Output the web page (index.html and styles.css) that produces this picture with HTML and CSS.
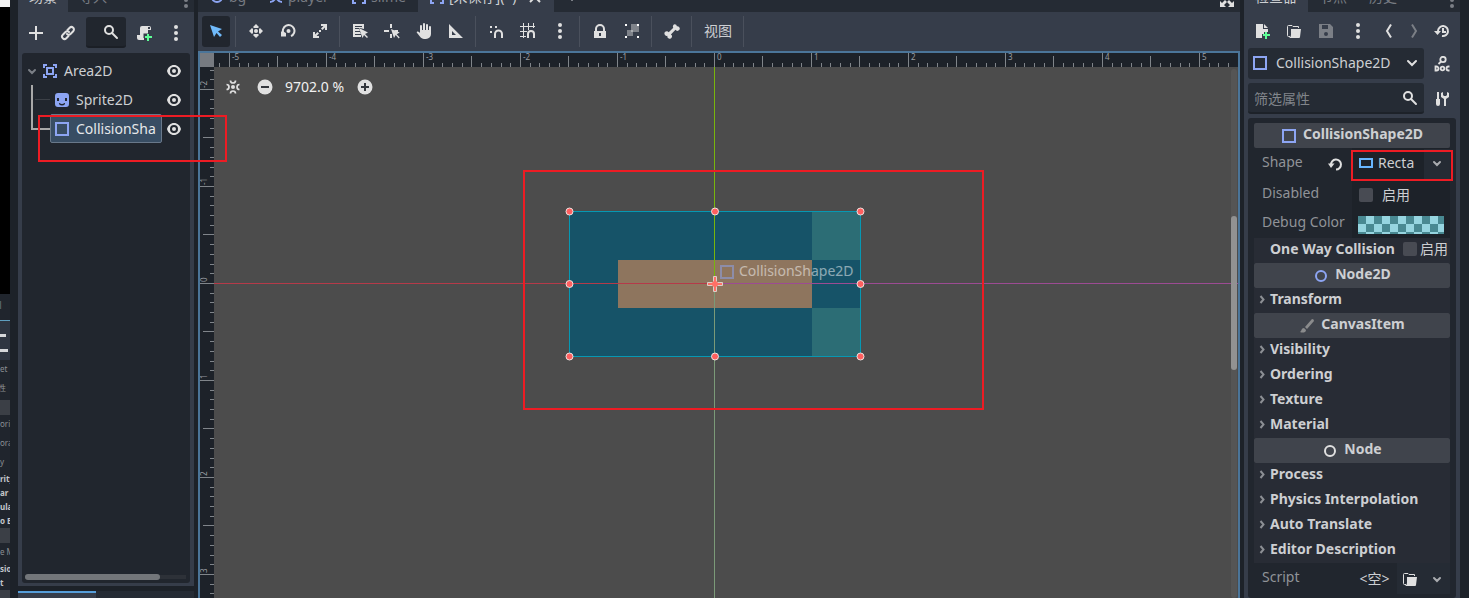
FILE: index.html
```html
<!DOCTYPE html>
<html lang="zh-CN">
<head>
<meta charset="utf-8">
<title>2D Scene Editor</title>
<link rel="stylesheet" href="styles.css">
</head>
<body>
<svg class="defs" aria-hidden="true">
  <symbol id="add" viewBox="0 0 16 16"><path d="M7 1v6H1v2h6v6h2V9h6V7H9V1z"/></symbol>
  <symbol id="link" viewBox="0 0 16 16"><g fill="none" stroke="currentColor" stroke-width="2" stroke-linecap="round"><path d="M7.500 5 9.700 2.800a2.450 2.450 0 0 1 3.500 3.500L10.500 9a2.450 2.450 0 0 1-3.500 0"/><path d="M8.500 11 6.300 13.200a2.450 2.450 0 0 1-3.500-3.500L5.500 7A2.450 2.450 0 0 1 9 7"/></g></symbol>
  <symbol id="search" viewBox="0 0 16 16"><g fill="none" stroke="currentColor" stroke-width="2"><circle cx="6" cy="6" r="4"/><path d="m9 9 5 5" stroke-linecap="round"/></g></symbol>
  <symbol id="script-add" viewBox="0 0 16 16"><path d="M6 1a2 2 0 0 0-2 2v7H1v3a2 2 0 0 0 2 2h5v-2h-.5V8.500H12V5h3V3a2 2 0 0 0-2-2zM12 2h2v2h-2z" fill-rule="evenodd"/><path d="M11 9h2v2h3v2h-3v3h-2v-3H9v-2h2z" fill="#5fff97"/></symbol>
  <symbol id="dots" viewBox="0 0 16 16"><circle cx="8" cy="2" r="2"/><circle cx="8" cy="8" r="2"/><circle cx="8" cy="14" r="2"/></symbol>
  <symbol id="eye" viewBox="0 0 16 16"><path fill-rule="evenodd" d="M8 2C4.500 2 2 4.500 1 8c1 3.500 3.500 6 7 6s6-2.500 7-6c-1-3.500-3.500-6-7-6zm0 2a4 4 0 1 1 0 8 4 4 0 0 1 0-8zm0 2a2 2 0 1 0 0 4 2 2 0 0 0 0-4z"/></symbol>
  <symbol id="down" viewBox="0 0 16 16"><path d="m4 6 4 4 4-4" fill="none" stroke="currentColor" stroke-width="2" stroke-linecap="round"/></symbol>
  <symbol id="down-small" viewBox="0 0 16 16"><path d="m5 7 3 3 3-3" fill="none" stroke="currentColor" stroke-width="2" stroke-linecap="round"/></symbol>
  <symbol id="right" viewBox="0 0 16 16"><path d="m6.500 5 3 3.500-3 3.500" fill="none" stroke="currentColor" stroke-width="2"/></symbol>
  <symbol id="area" viewBox="0 0 16 16"><path fill="#8da5f3" fill-rule="evenodd" d="M1 1h4v2H3v2H1zM11 1h4v4h-2V3h-2zM1 11h2v2h2v2H1zM13 11h2v4h-4v-2h2zM4 4h8v8H4zm2 2v4h4V6z"/></symbol>
  <symbol id="scene" viewBox="0 0 16 16"><path fill="#8da5f3" fill-rule="evenodd" d="M1 1h4v2H3v10h2v2H1zM11 1h4v14h-4v-2h2V3h-2zM5 5h6v6H5zm2 2v2h2V7z"/></symbol>
  <symbol id="sprite" viewBox="0 0 16 16"><path fill="#8da5f3" fill-rule="evenodd" d="M4 1h8a3 3 0 0 1 3 3v8a3 3 0 0 1-3 3H4a3 3 0 0 1-3-3V4a3 3 0 0 1 3-3zM3 6v3h2V6zm8 0v3h2V6zm-6 5a3 2.500 0 0 0 6 0H10a2 1 0 0 1-4 0z"/></symbol>
  <symbol id="shape" viewBox="0 0 16 16"><path d="M2 2h12v12H2z" fill="none" stroke="#8da5f3" stroke-width="2"/></symbol>
  <symbol id="rect" viewBox="0 0 16 16"><path d="M2 4h12v8H2z" fill="none" stroke="#68b6ff" stroke-width="2"/></symbol>
  <symbol id="ring" viewBox="0 0 16 16"><circle cx="8" cy="8" r="5" fill="none" stroke="currentColor" stroke-width="2"/></symbol>
  <symbol id="cursor" viewBox="0 0 16 16"><path d="m2 2 4 12 2.500-4 3.500 4 2-2-4-3.500L14 6z"/></symbol>
  <symbol id="move" viewBox="0 0 16 16"><circle cx="8" cy="8" r="2"/><path d="m8 1 3 3-1 1H6L5 4zM8 15l-3-3 1-1h4l1 1zM1 8l3-3 1 1v4l-1 1zM15 8l-3 3-1-1V6l1-1z"/></symbol>
  <symbol id="rotate" viewBox="0 0 16 16"><path d="M3.500 10.500A5.800 5.800 0 1 1 11 13.200" fill="none" stroke="currentColor" stroke-width="2"/><circle cx="8.500" cy="8" r="2"/><path d="M1 8.500h2l3 1.500v3.500H1z"/></symbol>
  <symbol id="scale" viewBox="0 0 16 16"><path d="M9 1h6v6h-2V4.500L10.500 7 9 5.500 11.500 3H9zM1 9h2v2.500L5.500 9 7 10.500 4.500 13H7v2H1zM7 7h2v2H7z"/></symbol>
  <symbol id="listsel" viewBox="0 0 16 16"><path d="M1 1h11v5L8 5H3v1h4l1 2H3v1h5l1 2H3v1h6v2H1zM3 3v1h7V3z" fill-rule="evenodd"/><path d="m7 5 3.500 10 1.500-3 3 3 1-1-3-3 3-1.500z"/></symbol>
  <symbol id="pivot" viewBox="0 0 16 16"><path d="M6 1h2v4H6zM0 7h5v2H0zM10 7h4v2h-2zM6 11h2v4H6z"/><path d="m7 6 3 9 1.700-3 3 3.500 1-1-3-3.300 3-1.700z"/></symbol>
  <symbol id="hand" viewBox="0 0 16 16"><path d="M7 1a1 1 0 0 1 2 0v6h1V2a1 1 0 0 1 2 0v5h1V4a1 1 0 0 1 2 0v7a5 5 0 0 1-5 5H8C5 16 3 12 1 10c-1-1.500 1-2 2-1l1 1V3a1 1 0 0 1 2 0v4h1z"/></symbol>
  <symbol id="triangle" viewBox="0 0 16 16"><path fill-rule="evenodd" d="M1 1v14h14zm3 7 4 4H4z"/></symbol>
  <symbol id="snap" viewBox="0 0 16 16"><path d="M2 3h2v2H2zM7 3h2v2H7zM2 8h2v2H2z"/><path d="M7 15v-4a3.500 3.500 0 0 1 7 0v4" fill="none" stroke="currentColor" stroke-width="2"/></symbol>
  <symbol id="gridsnap" viewBox="0 0 16 16"><path d="M3.500 0v15M8.500 0v7M13.500 0v5M0 3.500h15M0 8.500h7M0 13.500h6" stroke="currentColor" fill="none"/><path d="M8 15v-4a3 3 0 0 1 6 0v4" fill="none" stroke="currentColor" stroke-width="2"/></symbol>
  <symbol id="lock" viewBox="0 0 16 16"><path fill-rule="evenodd" d="M8 1a5 5 0 0 0-5 5v2H2v7h12V8h-1V6a5 5 0 0 0-5-5zm0 2a3 3 0 0 1 3 3v2H5V6a3 3 0 0 1 3-3zM7 10h2v3H7z"/></symbol>
  <symbol id="group" viewBox="0 0 16 16"><path d="M7 1h6v2h2v6H9v4H3V7h4z" fill="#7f838a"/><path d="M7 7h2v2H7z" fill="#a9acb0"/><path d="M1 1h2v2H1zM13 1h2v2h-2zM1 13h2v2H1zM13 13h2v2h-2z" fill="#fff"/></symbol>
  <symbol id="bone" viewBox="0 0 16 16"><path d="M10.500 1.200a2.300 2.300 0 0 0-1.200 3.500L4.700 9.300a2.300 2.300 0 1 0-1.200 3.400 2.300 2.300 0 1 0 3.400-1.200l4.600-4.700a2.300 2.300 0 1 0 1.400-3.500 2.300 2.300 0 0 0-2.400-2.100z"/></symbol>
  <symbol id="new" viewBox="0 0 16 16"><path d="M2 1h7v5h5v3h-4v2H8v4H2zM10 1l4 4h-4z"/><path d="M11 9h2v2h3v2h-3v3h-2v-3H9v-2h2z" fill="#5fff97"/></symbol>
  <symbol id="folder" viewBox="0 0 16 16"><path d="M4 13.500H2.500a1 1 0 0 1-1-1v-9a1 1 0 0 1 1-1H6l1 1h5.500V5" fill="none" stroke="currentColor"/><path d="M5 6h10l-1 8a1 1 0 0 1-1 1H3q2-1 2-3z"/></symbol>
  <symbol id="save" viewBox="0 0 16 16"><path fill-rule="evenodd" d="M1 1h11l3 3v11H1zm3 1v4h6V2zm4 7a2 2 0 1 0 0 4 2 2 0 0 0 0-4z"/></symbol>
  <symbol id="back" viewBox="0 0 16 16"><path d="m11 1.500-4 6.500 4 6.500" fill="none" stroke="currentColor" stroke-width="2"/></symbol>
  <symbol id="next" viewBox="0 0 16 16"><path d="m8 1.500 4 6.500-4 6.500" fill="none" stroke="currentColor" stroke-width="2"/></symbol>
  <symbol id="history" viewBox="0 0 16 16"><path d="M4 8a5 5 0 1 1 4 5M9 5v4h3" fill="none" stroke="currentColor" stroke-width="2"/><path d="M0 8h7l-3.500 4z"/></symbol>
  <symbol id="doc" viewBox="0 0 16 16"><g fill="none" stroke="currentColor" stroke-width="1.800"><circle cx="9" cy="3.500" r="2.700"/><path d="M7.200 5.300 4.500 8"/><path d="M1.500 10.500h1a2 2 0 0 1 0 4h-1zM15.500 10.500h-1a2 2 0 0 0 0 4h1" /><circle cx="8.500" cy="12.500" r="1.800"/></g></symbol>
  <symbol id="tools" viewBox="0 0 16 16"><path d="M3 1h2v7h1v5a2 2 0 0 1-4 0V8h1zM9 1v3l1 1h2l1-1V1l2 1v4l-3 2v7h-2V8L7 6V2z"/></symbol>
  <symbol id="reload" viewBox="0 0 16 16"><path d="M4 9a5 5 0 1 1 5 4.500" fill="none" stroke="currentColor" stroke-width="2"/><path d="M1 7.500h6.500L4 12z"/></symbol>
  <symbol id="brush" viewBox="0 0 16 16"><path d="m6 9 7-8q2 0 2 2L8 11zM5 10l2 2c0 3-4 3-6 2 2-1 1-4 4-4z" fill="#8b8c8d"/></symbol>
  <symbol id="center" viewBox="0 0 16 16"><circle cx="8" cy="8" r="2"/><path d="M5.500 1.500q0 2.500 2.500 2.500t2.500-2.500M5.500 14.500Q5.500 12 8 12t2.500 2.500M1.500 5.500Q4 5.500 4 8t-2.500 2.500M14.500 5.500Q12 5.500 12 8t2.500 2.500" fill="none" stroke="currentColor" stroke-width="1.700"/></symbol>
  <symbol id="minus" viewBox="0 0 16 16"><circle cx="8" cy="8" r="7.500"/><path d="M4 7h8v2H4z" fill="#33373d"/></symbol>
  <symbol id="plus" viewBox="0 0 16 16"><circle cx="8" cy="8" r="7.500"/><path d="M4 7h3V4h2v3h3v2H9v3H7V9H4z" fill="#33373d"/></symbol>
  <symbol id="expand" viewBox="0 0 16 16"><path d="M9 1h6v6l-2-2-3 3-2-2 3-3zM1 9l2 2 3-3 2 2-3 3 2 2H1zM1 1h6L5 3l3 3-2 2-3-3-2 2zM15 15H9l2-2-3-3 2-2 3 3 2-2z"/></symbol>
  <symbol id="close" viewBox="0 0 16 16"><path d="m3 3 10 10M13 3 3 13" stroke="currentColor" stroke-width="2" fill="none"/></symbol>
  <symbol id="player" viewBox="0 0 16 16"><path d="M2 3q4 0 6 5t6 5M2 13q4 0 6-5t6-5" stroke="#8da5f3" stroke-width="2" fill="none"/></symbol>
</svg>

<div class="app">
  <aside class="sliver" aria-hidden="true">
    <div class="sliver-top"></div>
    <div class="sliver-black"></div>
    <div class="sliver-row tall">引</div>
    <div class="sliver-tools"><i></i><i></i></div>
    <div class="sliver-row">et</div>
    <div class="sliver-row cjk">性</div>
    <div class="sliver-bar"></div>
    <div class="sliver-row">ori</div>
    <div class="sliver-row">ora</div>
    <div class="sliver-row">y</div>
    <div class="sliver-row bold">rity</div>
    <div class="sliver-row bold">ar</div>
    <div class="sliver-row bold">ula</div>
    <div class="sliver-row bold">o B</div>
    <div class="sliver-bar"></div>
    <div class="sliver-row">e M</div>
    <div class="sliver-row bold">sio</div>
    <div class="sliver-row bold">t</div>
    <div class="sliver-bar"></div>
  </aside>

  <div class="left">
    <section class="dock scene">
      <div class="tabs">
        <button class="tab active">场景</button><button class="tab">导入</button>
        <button class="tab-menu" aria-label="更多"><svg class="ico dim"><use href="#dots"/></svg></button>
      </div>
      <div class="scene-tools">
        <button class="btn" aria-label="添加"><svg class="ico"><use href="#add"/></svg></button>
        <button class="btn" aria-label="实例化"><svg class="ico"><use href="#link"/></svg></button>
        <label class="search"><input type="text" aria-label="筛选节点"><svg class="ico"><use href="#search"/></svg></label>
        <button class="btn" aria-label="附加脚本"><svg class="ico"><use href="#script-add"/></svg></button>
        <button class="btn" aria-label="选项"><svg class="ico"><use href="#dots"/></svg></button>
      </div>
      <div class="tree">
        <ul class="nodes">
          <li class="node root"><svg class="ico dim"><use href="#down-small"/></svg><svg class="ico"><use href="#area"/></svg><span class="name">Area2D</span><button class="eye" aria-label="可见"><svg class="ico"><use href="#eye"/></svg></button></li>
          <li class="node"><span class="branch"></span><span class="item"><svg class="ico"><use href="#sprite"/></svg><span class="name">Sprite2D</span></span><button class="eye" aria-label="可见"><svg class="ico"><use href="#eye"/></svg></button></li>
          <li class="node"><span class="branch last"></span><span class="item selected"><svg class="ico"><use href="#shape"/></svg><span class="name">CollisionSha</span></span><button class="eye" aria-label="可见"><svg class="ico"><use href="#eye"/></svg></button></li>
        </ul>
        <div class="hscroll"><span></span></div>
      </div>
    </section>
    <section class="dock lower"><div class="lower-tab"></div></section>
  </div>

  <main class="center">
    <div class="tabs">
      <button class="tab scene-tab w-bg"><svg class="ico blue"><use href="#ring"/></svg>bg</button>
      <button class="tab scene-tab w-player"><svg class="ico"><use href="#player"/></svg>player</button>
      <button class="tab scene-tab w-slime"><svg class="ico"><use href="#scene"/></svg>slime</button>
      <button class="tab scene-tab active w-open"><svg class="ico"><use href="#scene"/></svg>[未保存](*)<svg class="ico close"><use href="#close"/></svg></button>
      <button class="tab new-tab" aria-label="新建场景"><svg class="ico dim"><use href="#add"/></svg></button>
      <button class="tab-menu" aria-label="专注模式"><svg class="ico"><use href="#expand"/></svg></button>
    </div>
    <div class="toolbar">
      <button class="btn on" aria-label="选择"><svg class="ico"><use href="#cursor"/></svg></button><i class="sep"></i>
      <button class="btn" aria-label="移动"><svg class="ico"><use href="#move"/></svg></button>
      <button class="btn" aria-label="旋转"><svg class="ico"><use href="#rotate"/></svg></button>
      <button class="btn" aria-label="缩放"><svg class="ico"><use href="#scale"/></svg></button><i class="sep"></i>
      <button class="btn" aria-label="列表选择"><svg class="ico"><use href="#listsel"/></svg></button>
      <button class="btn" aria-label="轴心"><svg class="ico"><use href="#pivot"/></svg></button>
      <button class="btn" aria-label="平移"><svg class="ico"><use href="#hand"/></svg></button>
      <button class="btn" aria-label="标尺"><svg class="ico"><use href="#triangle"/></svg></button><i class="sep"></i>
      <button class="btn" aria-label="智能吸附"><svg class="ico"><use href="#snap"/></svg></button>
      <button class="btn" aria-label="栅格吸附"><svg class="ico"><use href="#gridsnap"/></svg></button>
      <button class="btn" aria-label="吸附选项"><svg class="ico"><use href="#dots"/></svg></button><i class="sep"></i>
      <button class="btn" aria-label="锁定"><svg class="ico"><use href="#lock"/></svg></button>
      <button class="btn" aria-label="编组"><svg class="ico"><use href="#group"/></svg></button><i class="sep"></i>
      <button class="btn" aria-label="骨骼"><svg class="ico"><use href="#bone"/></svg></button><i class="sep"></i>
      <button class="btn text">视图</button><i class="sep"></i>
    </div>
    <div class="viewport">
      <div class="corner"></div>
      <svg class="ruler">
        <defs><pattern id="ticks-x" patternUnits="userSpaceOnUse" x="500" y="0" width="97" height="14"><path class="tick" d="M0 0h1v14H0zM10 10h1v4h-1zM19 10h1v4h-1zM29 10h1v4h-1zM39 10h1v4h-1zM48 3h1v11h-1zM58 10h1v4h-1zM68 10h1v4h-1zM78 10h1v4h-1zM87 10h1v4h-1z"/></pattern></defs>
        <rect width="100%" height="14" fill="url(#ticks-x)"/>
        <g class="num"><text x="18" y="7">-5</text><text x="115" y="7">-4</text><text x="212" y="7">-3</text><text x="309" y="7">-2</text><text x="406" y="7">-1</text><text x="503" y="7">0</text><text x="600" y="7">1</text><text x="697" y="7">2</text><text x="794" y="7">3</text><text x="891" y="7">4</text><text x="988" y="7">5</text></g>
      </svg>
      <svg class="ruler">
        <defs><pattern id="ticks-y" patternUnits="userSpaceOnUse" x="0" y="216" width="14" height="97"><path class="tick" d="M0 0h14v1H0zM10 10h4v1h-4zM10 19h4v1h-4zM10 29h4v1h-4zM10 39h4v1h-4zM3 48h11v1H3zM10 58h4v1h-4zM10 68h4v1h-4zM10 78h4v1h-4zM10 87h4v1h-4z"/></pattern></defs>
        <rect width="14" height="100%" fill="url(#ticks-y)"/>
        <g class="num"><text transform="translate(7 21) rotate(-90)">-2</text><text transform="translate(7 118) rotate(-90)">-1</text><text transform="translate(7 215) rotate(-90)">0</text><text transform="translate(7 312) rotate(-90)">1</text><text transform="translate(7 409) rotate(-90)">2</text><text transform="translate(7 506) rotate(-90)">3</text></g>
      </svg>
      <div class="stage">
        <svg class="world">
          <path d="M355 144h243v145H355z" fill="#165368"/>
          <path d="M598 193h49v48h-49z" fill="#165368"/>
          <path d="M598 144h49v49h-49zM598 241h49v48h-49z" fill="#2c6d75"/>
          <path d="M404 193h194v48H404z" fill="#8e755e"/>
          <path d="M500 0h1v216h-1z" fill="#78b50c"/>
          <path d="M500 217h1v400h-1z" fill="#7b9a78"/>
          <path d="M0 216h500v1H0z" fill="#b53a49"/>
          <rect x="501" y="216" width="100%" height="1" fill="#9c4b93"/>
          <path d="M355.500 144.500h291v145h-291z" fill="none" stroke="#0698b3"/>
          <g opacity=".5"><svg x="505" y="197" width="16" height="16"><use href="#shape"/></svg><text x="525" y="209" class="label">CollisionShape2D</text></g>
          <path d="M499.500 209.500h3v6h6v3h-6v6h-3v-6h-6v-3h6z" fill="#ff7066" stroke="#dccfc8"/>
          <g class="handle"><circle cx="355.500" cy="144.500" r="3.500"/><circle cx="501" cy="144.500" r="3.500"/><circle cx="646.500" cy="144.500" r="3.500"/><circle cx="355.500" cy="217" r="3.500"/><circle cx="646.500" cy="217" r="3.500"/><circle cx="355.500" cy="289.500" r="3.500"/><circle cx="501" cy="289.500" r="3.500"/><circle cx="646.500" cy="289.500" r="3.500"/></g>
          <circle cx="501" cy="217" r="3" fill="#ff7066"/>
        </svg>
        <div class="zoom">
          <button aria-label="居中"><svg class="ico"><use href="#center"/></svg></button>
          <button aria-label="缩小"><svg class="ico"><use href="#minus"/></svg></button>
          <button class="percent">9702.0 %</button>
          <button aria-label="放大"><svg class="ico"><use href="#plus"/></svg></button>
        </div>
        <div class="vscroll"><span></span></div>
        <div class="mark mark-stage"></div>
      </div>
    </div>
  </main>

  <section class="dock inspector">
    <div class="tabs">
      <button class="tab active">检查器</button><button class="tab">节点</button><button class="tab">历史</button>
      <button class="tab-menu" aria-label="更多"><svg class="ico dim"><use href="#dots"/></svg></button>
    </div>
    <div class="insp-tools">
      <button class="btn" aria-label="新建"><svg class="ico"><use href="#new"/></svg></button>
      <button class="btn" aria-label="打开"><svg class="ico"><use href="#folder"/></svg></button>
      <button class="btn dim" aria-label="保存"><svg class="ico"><use href="#save"/></svg></button>
      <button class="btn" aria-label="选项"><svg class="ico"><use href="#dots"/></svg></button>
      <span class="nav"><button class="btn" aria-label="后退"><svg class="ico"><use href="#back"/></svg></button><button class="btn dim" aria-label="前进"><svg class="ico"><use href="#next"/></svg></button></span>
      <button class="btn" aria-label="历史"><svg class="ico"><use href="#history"/></svg></button>
    </div>
    <div class="insp-row">
      <label class="box object"><svg class="ico"><use href="#shape"/></svg><select aria-label="对象"><option>CollisionShape2D</option></select><svg class="ico"><use href="#down"/></svg></label>
      <button class="btn" aria-label="文档"><svg class="ico"><use href="#doc"/></svg></button>
    </div>
    <div class="insp-row">
      <label class="box filter"><input type="text" placeholder="筛选属性" aria-label="筛选属性"><svg class="ico"><use href="#search"/></svg></label>
      <button class="btn" aria-label="工具"><svg class="ico"><use href="#tools"/></svg></button>
    </div>
    <div class="props">
      <h2 class="class"><svg class="ico"><use href="#shape"/></svg><span>CollisionShape2D</span></h2>
      <div class="prop shape"><span class="key">Shape</span><button class="reset" aria-label="重置"><svg class="ico"><use href="#reload"/></svg></button>
        <div class="value"><button class="res"><svg class="ico"><use href="#rect"/></svg>Recta</button><button class="drop" aria-label="展开"><svg class="ico soft"><use href="#down-small"/></svg></button><div class="mark mark-shape"></div></div></div>
      <div class="prop"><span class="key">Disabled</span><label class="value check"><input type="checkbox"><span>启用</span></label></div>
      <div class="prop"><span class="key">Debug Color</span><div class="value"><button class="swatch" aria-label="Debug Color"></button></div></div>
      <div class="section oneway"><span>One Way Collision</span><label class="check"><input type="checkbox"><span>启用</span></label></div>
      <h2 class="class"><svg class="ico blue"><use href="#ring"/></svg><span>Node2D</span></h2>
      <button class="section"><svg class="ico"><use href="#right"/></svg>Transform</button>
      <h2 class="class"><svg class="ico"><use href="#brush"/></svg><span>CanvasItem</span></h2>
      <button class="section"><svg class="ico"><use href="#right"/></svg>Visibility</button>
      <button class="section"><svg class="ico"><use href="#right"/></svg>Ordering</button>
      <button class="section"><svg class="ico"><use href="#right"/></svg>Texture</button>
      <button class="section"><svg class="ico"><use href="#right"/></svg>Material</button>
      <h2 class="class"><svg class="ico"><use href="#ring"/></svg><span>Node</span></h2>
      <button class="section"><svg class="ico"><use href="#right"/></svg>Process</button>
      <button class="section"><svg class="ico"><use href="#right"/></svg>Physics Interpolation</button>
      <button class="section"><svg class="ico"><use href="#right"/></svg>Auto Translate</button>
      <button class="section"><svg class="ico"><use href="#right"/></svg>Editor Description</button>
      <div class="prop tall"><span class="key">Script</span><div class="value plain"><button class="empty">&lt;空&gt;</button><button class="drop" aria-label="加载"><svg class="ico"><use href="#folder"/></svg></button><button class="drop" aria-label="展开"><svg class="ico soft"><use href="#down-small"/></svg></button></div></div>
    </div>
  </section>
</div>
<div class="mark mark-tree"></div>
</body>
</html>
```

FILE: styles.css
```css
:root {
  --base: #1d2229;
  --dock: #363d4a;
  --dark: #21262e;
  --tabbar: #252b34;
  --text: #cdcfd2;
  --icon: #e0e0e0;
}
* { box-sizing: border-box; }
body {
  margin: 0;
  height: 100vh;
  overflow: hidden;
  background: var(--base);
  color: var(--text);
  font: 14px/20px "Noto Sans", "Noto Sans CJK SC", sans-serif;
}
button, input, select { font: inherit; color: inherit; background: none; border: 0; padding: 0; margin: 0; outline: 0; }
.defs { position: absolute; width: 0; height: 0; }
.ico { width: 16px; height: 16px; flex: none; display: block; fill: currentColor; color: var(--icon); }
.ico.soft { color: #a9abaf; }
.ico.blue { color: #8da5f3; }
.ico.dim, .dim .ico { color: #7b7f86; }
.app { display: flex; height: 100%; }

/* edge of the window behind */
.sliver { width: 10px; margin-right: 8px; overflow: hidden; font-size: 8px; line-height: 14px; color: #8c8f94; background: #20252d; flex: none; }
.sliver-top { height: 7px; background: #f2f2f2; }
.sliver-black { height: 287px; background: #000; }
.sliver-row { height: 19px; padding-top: 2px; white-space: nowrap; }
.sliver-row.tall { height: 26px; padding-top: 4px; text-indent: -6px; }
.sliver-row.cjk { height: 21px; text-indent: -2px; }
.sliver-row.bold { height: 14px; padding: 0; font-weight: 700; color: #c4c6c9; }
.sliver-tools { height: 40px; background: #2e3541; border-top: 1px solid #5f9fc0; display: flex; flex-direction: column; gap: 12px; padding-top: 13px; }
.sliver-tools i { height: 3px; width: 6px; background: #d5d7da; }
.sliver-tools i + i { width: 8px; }
.sliver-bar { height: 15px; background: #3b3f46; }

/* docks and tabs */
.dock { background: var(--dock); display: flex; flex-direction: column; }
.tabs { height: 12px; flex: none; display: flex; align-items: flex-end; background: var(--tabbar); overflow: hidden; }
.tab { height: 30px; flex: none; padding: 0 11px; color: #777b82; display: flex; align-items: center; gap: 4px; }
.tab.active { background: var(--dock); color: var(--text); }
.tab-menu { margin-left: auto; height: 24px; flex: none; }
.btn { width: 28px; height: 31px; display: flex; align-items: center; justify-content: center; flex: none; border-radius: 3px; }

.left { width: 176px; flex: none; display: flex; flex-direction: column; gap: 5px; margin-right: 4px; }
.scene { flex: 1; min-height: 0; padding: 0 4px 3px; }
.scene .tabs { margin: 0 -4px; }
.scene-tools { display: flex; gap: 4px; height: 41px; align-items: center; flex: none; }
.search { flex: 1; display: flex; align-items: center; height: 31px; min-width: 0; padding-right: 7px; background: var(--dark); border-bottom: 2px solid #1b1f26; border-radius: 3px; }
.search input { flex: 1; width: 0; min-width: 0; }
.tree { flex: 1; min-height: 0; display: flex; flex-direction: column; background: var(--dark); border-radius: 3px; }
.nodes { list-style: none; margin: 0; padding: 3px 4px 0 2px; flex: 1; }
.node { height: 29px; display: flex; align-items: center; }
.root { gap: 2px; }
.root .name { flex: 1; margin-left: 4px; }
.item { flex: 1; min-width: 0; display: flex; align-items: center; gap: 6px; height: 29px; padding: 0 3px; border: 1px solid transparent; margin-right: 4px; }
.item .name { white-space: nowrap; }
.item.selected { background: #384d63; border-color: #69788a; border-radius: 2px; color: #e6e8ea; }
.branch { width: 26px; height: 29px; flex: none; background: linear-gradient(#a9a9a9, #a9a9a9) 7px 0 / 2px 29px no-repeat, linear-gradient(#3c4047, #3c4047) 11px 14px / 15px 1px no-repeat; }
.branch.last { background: linear-gradient(#a9a9a9, #a9a9a9) 7px 0 / 2px 15px no-repeat, linear-gradient(#a9a9a9, #a9a9a9) 7px 14px / 19px 2px no-repeat; }
.eye { flex: none; margin-right: 4px; }
.hscroll { margin: 0 4px 3px 3px; height: 6px; background: linear-gradient(#2d3138, #2d3138) 0 1px / 100% 4px no-repeat; }
.hscroll span { display: block; width: 84%; height: 6px; border-radius: 3px; background: #73767a; }
.lower { height: 7px; background: var(--tabbar); flex: none; }
.lower-tab { width: 78px; height: 7px; background: var(--dock); border-top: 2px solid #569eda; }

/* canvas editor */
.center { flex: 1; min-width: 0; display: flex; flex-direction: column; margin-right: 4px; }
.w-bg { width: 59px; }
.w-player { width: 83px; }
.w-slime { width: 78px; }
.w-open { width: 136px; }
.center .tab.new-tab { padding: 0 10px 6px; }
.close { margin-left: auto; }
.center .tab-menu { height: 24px; padding: 0 5px; }
.toolbar { height: 39px; flex: none; background: var(--dock); display: flex; gap: 4px; padding: 4px; }
.toolbar .btn { padding-bottom: 1px; }
.btn.on { background: var(--dark); }
.btn.on .ico { color: #70bafa; }
.btn.text { width: 40px; }
.sep { width: 1px; height: 31px; margin: 0 2px 0 1px; background: #4a505c; flex: none; }
.viewport { flex: 1; min-height: 0; display: grid; grid-template: 14px minmax(0, 1fr) / 14px minmax(0, 1fr); border: 2px solid #4b7599; border-bottom: 0; }
.corner { background: #777b81; }
.ruler { width: 100%; height: 100%; display: block; overflow: hidden; background: var(--base); }
.tick { fill: #80858a; }
.num { font-size: 8px; fill: #999da1; }
.stage { position: relative; overflow: hidden; background: #4c4c4c; }
.world { position: absolute; inset: 0; width: 100%; height: 100%; }
.label { fill: #fff; }
.handle { fill: #ff5f5f; stroke: #f0e2e0; stroke-width: 1px; }
.zoom { position: absolute; left: 11px; top: 10px; display: flex; align-items: center; gap: 16px; height: 20px; color: #f0f0f0; text-shadow: 0 1px 1px #222; }
.percent { margin: 0 -3px 0 -4px; }
.zoom button { white-space: nowrap; }
.vscroll { position: absolute; right: 1px; top: 2px; bottom: 0; width: 6px; background: #555; border-radius: 3px; padding-top: 147px; }
.vscroll span { display: block; height: 154px; border-radius: 3px; background: #929292; }
.mark { position: absolute; z-index: 2; border: 2px solid #ed1c24; pointer-events: none; }
.mark-stage { left: 309px; top: 103px; width: 461px; height: 240px; }
.mark-tree { left: 38px; top: 115px; width: 189px; height: 47px; }
.mark-shape { left: -1px; top: 2px; right: -3px; height: 31px; }

/* inspector */
.inspector { width: 216px; flex: none; margin-right: 9px; padding: 0 4px; overflow: hidden; }
.inspector .tabs { margin: 0 -4px; }
.insp-tools { display: flex; gap: 4px; height: 36px; flex: none; padding-top: 4px; }
.insp-tools .btn { padding-bottom: 1px; }
.nav { display: flex; flex: 1; }
.nav .btn { width: 24px; }
.insp-row { display: flex; align-items: center; gap: 4px; height: 31px; flex: none; margin-bottom: 4px; }
.box { flex: 1; min-width: 0; display: flex; align-items: center; height: 31px; background: var(--tabbar); border-radius: 3px; padding: 0 4px; gap: 8px; }
.box select, .box input { flex: 1; min-width: 0; width: 0; appearance: none; height: 29px; }
.box.object { padding-bottom: 2px; }
.filter { border-bottom: 2px solid #1d2229; padding: 0 6px; }
.filter input { padding-top: 2px; }
.filter input::placeholder { color: #81858b; opacity: 1; }
.props { flex: none; padding: 5px 6px 4px; background: var(--dark); border-radius: 3px; display: flex; flex-direction: column; }
.class { height: 25px; margin: 0; font-size: 14px; line-height: 20px; display: flex; justify-content: center; gap: 6px; background: #40444c; border-radius: 2px; }
.class .ico { margin-top: 5px; }
.class span { margin-top: 1px; }
.prop { height: 29px; display: flex; align-items: center; position: relative; }
.prop.tall { height: 31px; }
.prop.shape { height: 32px; }
.prop.shape .res, .prop.shape .drop { padding-bottom: 2px; }
.key { width: 98px; padding-left: 8px; color: #909398; white-space: nowrap; flex: none; }
.prop .key { padding-bottom: 4px; }
.reset { margin-left: -25px; width: 25px; flex: none; }
.value { position: relative; flex: 1; min-width: 0; height: 100%; display: flex; align-items: center; background: var(--base); }
.value.plain { background: none; }
.res { flex: 1; display: flex; align-items: center; gap: 4px; padding-left: 6px; height: 100%; }
.drop { width: 26px; height: 31px; display: flex; align-items: center; justify-content: center; background: var(--tabbar); flex: none; }
.plain .drop + .drop { width: 27px; }
.empty { flex: 1; white-space: nowrap; }
.check { display: flex; align-items: center; }
.value.check { padding-left: 7px; gap: 9px; }
.check input { appearance: none; width: 14px; height: 14px; background: #484b53; border-radius: 2px; flex: none; }
.swatch { margin: 2px 6px 0; flex: 1; height: 18px; background: repeating-conic-gradient(#96d5e0 0 25%, #498992 0 50%) 0 0 / 16px 16px; }
.section { height: 25px; display: flex; align-items: center; padding: 0 2px 4px 0; font-weight: 700; background: #282c35; text-align: left; white-space: nowrap; }
.section .ico { color: #8c8f94; }
.oneway { padding-left: 16px; justify-content: space-between; }
.oneway .check { font-weight: 400; gap: 3px; }
```
